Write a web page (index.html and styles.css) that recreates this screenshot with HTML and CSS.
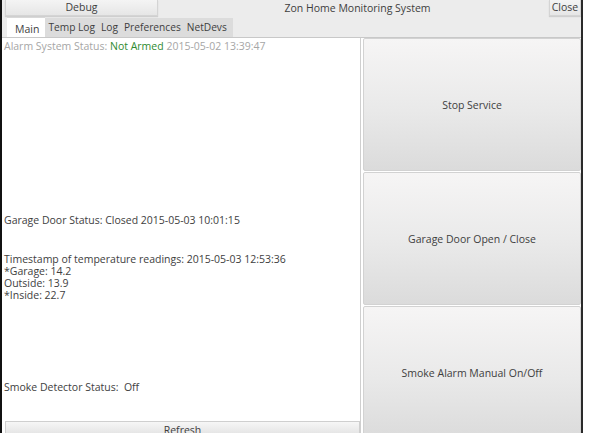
FILE: index.html
```html
<!DOCTYPE html>
<html>
<head>
<meta charset="utf-8">
<link rel="stylesheet" href="styles.css">
</head>
<body>
<div class="window">
  <div class="topbar">
    <button class="btn debug">Debug</button>
    <div class="title">Zon Home Monitoring System</div>
    <button class="btn close">Close</button>
  </div>
  <div class="tabs">
    <div class="tab active">Main</div>
    <div class="tabgroup">
      <div class="tab">Temp Log</div>
      <div class="tab">Log</div>
      <div class="tab">Preferences</div>
      <div class="tab">NetDevs</div>
    </div>
  </div>
  <div class="content">
    <div class="left">
      <div class="pane">
        <div class="line alarm">Alarm System Status: <span class="ok">Not Armed</span> 2015-05-02 13:39:47</div>
        <div class="line garage">Garage Door Status: Closed 2015-05-03 10:01:15</div>
        <div class="temps">
          <div class="line">Timestamp of temperature readings: 2015-05-03 12:53:36</div>
          <div class="line">*Garage: 14.2</div>
          <div class="line">Outside: 13.9</div>
          <div class="line">*Inside: 22.7</div>
        </div>
        <div class="line smoke">Smoke Detector Status: &nbsp;Off</div>
      </div>
      <button class="refresh">Refresh</button>
    </div>
    <div class="right">
      <button class="big">Stop Service</button>
      <button class="big">Garage Door Open / Close</button>
      <button class="big">Smoke Alarm Manual On/Off</button>
    </div>
  </div>
</div>
</body>
</html>
```
FILE: styles.css
```css
html, body {
  margin: 0;
  padding: 0;
  background: #ffffff;
  overflow: hidden;
}
body {
  font-family: "Open Sans", "DejaVu Sans", sans-serif;
  font-size: 10.5px;
  color: #3e3e3e;
}
.window {
  width: 583px;
  height: 433px;
  box-sizing: border-box;
  border-left: 2px solid #111;
  border-right: 2px solid #2a2a2a;
  background: #ececec;
  display: flex;
  flex-direction: column;
  overflow: hidden;
}
.topbar {
  display: flex;
  align-items: flex-start;
  height: 17px;
}
.btn {
  font: inherit;
  color: #3e3e3e;
  border: 1px solid #d4d4d4;
  border-top: none;
  background: linear-gradient(#f4f4f4, #e6e6e6);
  box-shadow: 0 1px 1px rgba(0,0,0,0.12);
  padding: 0;
  height: 16px;
  line-height: 15px;
}
.debug {
  margin-left: 3px;
  width: 153px;
}
.title {
  flex: 1;
  text-align: center;
  line-height: 17px;
  padding-left: 8px;
}
.close {
  width: 32px;
  margin-right: 0;
}
.tabs {
  display: flex;
  height: 20px;
  padding-left: 5px;
  border-bottom: 1px solid #c8c8c8;
  align-items: flex-end;
}
.tab {
  padding: 0 3px;
  font-size: 10.2px;
}
.tab.active {
  font-size: 10.5px;
  background: #ffffff;
  height: 20px;
  line-height: 22px;
  padding: 0 6px 0 8px;
  border-top: 1px solid #d8d8d8;
  box-sizing: border-box;
}
.tabgroup {
  display: flex;
  background: #dcdcdc;
  height: 19px;
  align-items: center;
  padding-right: 3px;
}
.tabgroup .tab {
  line-height: 19px;
  height: 19px;
}
.content {
  flex: 1;
  display: flex;
  background: #ffffff;
  min-height: 0;
}
.left {
  width: 358px;
  display: flex;
  flex-direction: column;
  border-right: 1px solid #cfcfcf;
  margin-right: 2px;
}
.pane {
  flex: 1;
  padding-left: 2px;
  display: flex;
  flex-direction: column;
}
.line {
  line-height: 12px;
  white-space: nowrap;
}
.alarm {
  color: #a6a6a6;
  margin-top: 2px;
}
.ok {
  color: #2f8a2f;
}
.garage {
  margin-top: 162px;
}
.temps {
  margin-top: 27px;
}
.smoke {
  margin-top: 80px;
}
.refresh {
  font: inherit;
  color: #3e3e3e;
  margin: auto 0 0 3px;
  width: 355px;
  height: 12px;
  padding: 0;
  line-height: 16px;
  overflow: hidden;
  border: 1px solid #cfcfcf;
  border-bottom: none;
  background: linear-gradient(#f6f6f6, #e6e6e6);
}
.right {
  width: 219px;
  display: flex;
  flex-direction: column;
  gap: 1px;
}
.big {
  font: inherit;
  color: #3e3e3e;
  flex: 0 0 133px;
  border: 1px solid #d2d2d2;
  border-radius: 2px;
  background: linear-gradient(#f6f5f5, #e9e9e9 55%, #dbdbdb);
  padding: 0;
}
```
